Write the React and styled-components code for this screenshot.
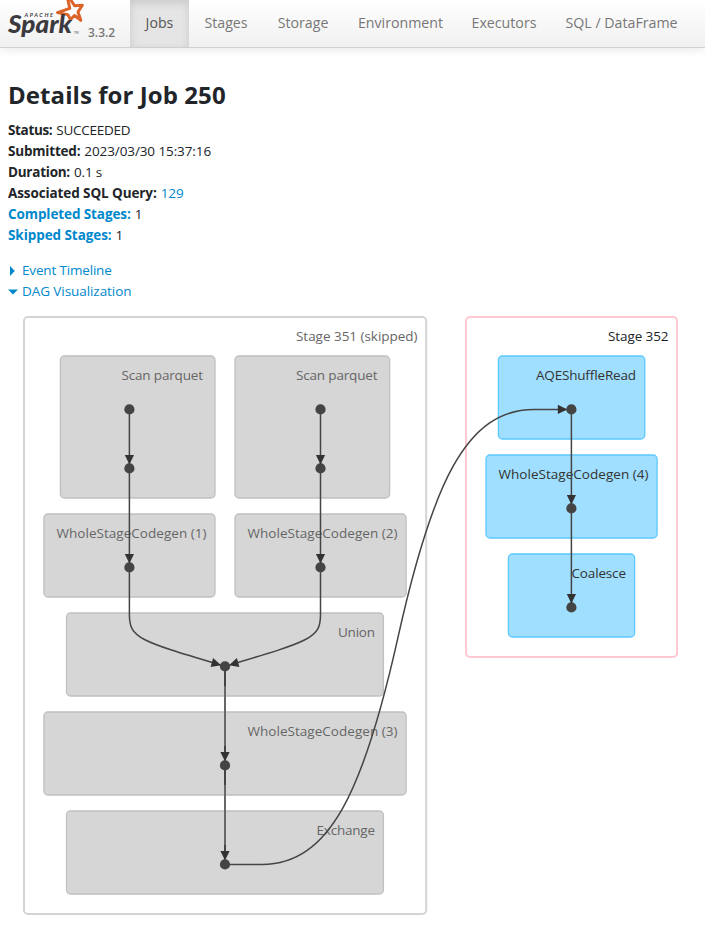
import React from "react";
import styled, { createGlobalStyle } from "styled-components";

const GlobalStyle = createGlobalStyle`
  * { box-sizing: border-box; }
  body {
    margin: 0;
    background: #fff;
    color: #212529;
    font: 13.5px/21px "Open Sans", "Noto Sans", sans-serif;
    overflow: hidden;
  }
`;

const Navbar = styled.nav`
  display: flex;
  height: 48px;
  border-bottom: 1px solid #d0d0d0;
  background: linear-gradient(#fff, #f0f0f0);
  box-shadow: 0 1px 10px rgba(0, 0, 0, 0.1);
`;

const Brand = styled.a`
  display: flex;
  width: 130px;
  flex: none;
`;

const Logo = styled.svg`
  width: 88px;
  height: 44px;
  flex: none;
`;

const Version = styled.span`
  padding-top: 22px;
  font-size: 12px;
  line-height: 21px;
  font-weight: 600;
  color: #777;
  letter-spacing: 0;
`;

const NavItem = styled.a`
  width: ${(p) => p.$width}px;
  flex: none;
  height: 47px;
  padding-top: 12px;
  text-align: center;
  font-size: 14.2px;
  line-height: 21px;
  white-space: nowrap;
  letter-spacing: ${(p) => p.$spacing || 0}px;
  color: ${(p) => (p.$active ? "#555" : "#777")};
  background: ${(p) => (p.$active ? "#e5e5e5" : "transparent")};
  box-shadow: ${(p) => (p.$active ? "inset 0 3px 8px rgba(0, 0, 0, 0.125)" : "none")};
`;

const Details = styled.main`
  padding: 32px 8px 0;
`;

const Title = styled.h3`
  margin: 0 0 10px;
  font-size: 24px;
  line-height: 30px;
  font-weight: 700;
  letter-spacing: 0.07px;
  white-space: nowrap;
`;

const Summary = styled.ul`
  list-style: none;
  margin: 0 0 14px;
  padding: 0;
`;

const Row = styled.li`
  height: 21px;
  white-space: nowrap;
`;

const Label = styled.strong`
  font-weight: 700;
  letter-spacing: ${(p) => p.$spacing}px;
  color: ${(p) => (p.$link ? "#0088cc" : "inherit")};
  margin-right: 4px;
`;

const Value = styled.span`
  letter-spacing: ${(p) => p.$spacing || 0}px;
  color: ${(p) => (p.$link ? "#0088cc" : "inherit")};
`;

const Toggle = styled.a`
  display: flex;
  align-items: center;
  height: 21px;
  color: #0088cc;
  letter-spacing: ${(p) => p.$spacing}px;
`;

const Caret = styled.svg`
  width: 14px;
  height: 12px;
`;

const Graph = styled.svg`
  display: block;
  width: 705px;
  height: 641px;
  text {
    font: 13.5px "Open Sans", "Noto Sans", sans-serif;
  }
`;

const palettes = {
  skipped: { fill: "#d6d6d6", stroke: "#c0c0c0", text: "#666", width: 1.3 },
  active: { fill: "#a0dfff", stroke: "#5cc9ff", text: "#333", width: 1.3 },
  skippedStage: { fill: "#fff", stroke: "#d4d4d4", text: "#666", width: 2 },
  stage: { fill: "#fff", stroke: "#ffc8d2", text: "#212529", width: 2 },
};

const clusters = [
  ["Stage 351 (skipped)", 24, 317, 426.2, 914, 296, 417.5, "skippedStage"],
  ["Scan parquet", 60.4, 356, 215, 498, 121.5, 203, "skipped"],
  ["Scan parquet", 235, 356, 389.6, 498, 296, 377.5, "skipped"],
  ["WholeStageCodegen (1)", 43.9, 514, 215, 597, 56.5, 206.5, "skipped"],
  ["WholeStageCodegen (2)", 235, 514, 406.1, 597, 247.5, 397.5, "skipped"],
  ["Union", 66.5, 613, 383.4, 696, 338, 375, "skipped"],
  ["WholeStageCodegen (3)", 43.9, 712, 406.1, 795, 247.5, 397.5, "skipped"],
  ["Exchange", 66.5, 811, 383.4, 894, 316.5, 375, "skipped"],
  ["Stage 352", 466, 317, 677.1, 657, 608, 668.5, "stage"],
  ["AQEShuffleRead", 498.4, 356, 644.8, 439, 536, 636, "active"],
  ["WholeStageCodegen (4)", 486, 455, 657.1, 538, 498.5, 648.5, "active"],
  ["Coalesce", 508.4, 554, 634.6, 637, 571.5, 626, "active"],
];

const nodes = [
  [129.4, 409.4], [129.4, 468.4], [129.4, 567.4],
  [320.5, 409.4], [320.5, 468.4], [320.5, 567.4],
  [225, 666.4], [225, 765.4], [225, 864.4],
  [571.4, 409.4], [571.4, 508.4], [571.4, 607.4],
];

const edges = [
  "M129.4 414V464", "M129.4 473V563",
  "M320.5 414V464", "M320.5 473V563",
  "M129.4 572V615C129.4 638 140 641 220.5 665",
  "M320.5 572V615C320.5 638 310 641 229.5 665",
  "M571.4 414V504", "M571.4 513V603",
  "M230 864.4H262C330 864.4 364 790 398.1 636.9C432.2 483.8 466.2 409.4 534 409.4H566.5",
];

const arrows = [
  [129.4, 464, 90], [129.4, 563, 90],
  [320.5, 464, 90], [320.5, 563, 90],
  [220.5, 665, 16], [229.5, 665, 164],
  [225, 761, 90], [225, 860, 90],
  [571.4, 504, 90], [571.4, 603, 90], [566.8, 409.4, 0],
];

function SparkLogo() {
  return (
    <Logo viewBox="0 0 88 44">
      <path
        d="M68 0.5L69.8 8.3L57.5 12.6L67.8 14.6L70.5 19.5L74.5 15.5L80.8 20.3L78 12L82.3 5.2L74.6 5.8L69.5 -2Z"
        fill="#fff" stroke="#dc6428" strokeWidth="3" strokeLinejoin="round"
      />
      <text x="24.5" y="17" textLength="28.5" fontFamily="Lato" fontWeight="700" fontStyle="italic" fontSize="5.6" fill="#3c3a3e">APACHE</text>
      <text x="8" y="33" textLength="64" lengthAdjust="spacingAndGlyphs" fontFamily="Lato" fontWeight="900" fontStyle="italic" fontSize="24.5" fill="#3c3a3e">Spark</text>
      <text x="74" y="34" fontFamily="Lato" fontSize="3" fill="#3c3a3e">TM</text>
    </Logo>
  );
}

function Dag() {
  return (
    <Graph viewBox="0 302 705 641">
      {clusters.map(([name, x, y, right, bottom, start, end, kind]) => (
        <g key={name + x}>
          <rect x={x} y={y} width={right - x} height={bottom - y} rx="4" fill={palettes[kind].fill} stroke={palettes[kind].stroke} strokeWidth={palettes[kind].width} />
          <text x={start} y={y + 24} textLength={end - start} fill={palettes[kind].text}>{name}</text>
        </g>
      ))}
      {nodes.map(([x, y]) => <circle key={`${x}-${y}`} cx={x} cy={y} r="5.1" fill="#444" />)}
      {edges.map((d) => <path key={d} d={d} fill="none" stroke="#444" strokeWidth="1.5" />)}
      <path d="M225 671V761M225 770V860" stroke="#686868" strokeWidth="2" />
      <path d="M225 671V686M225 746V755M225 770V785M225 845V854" stroke="#444" strokeWidth="2" />
      {arrows.map(([x, y, angle]) => (
        <path key={`${x}-${y}`} d="M-9 -4.6L0.5 0L-9 4.6Z" transform={`translate(${x} ${y}) rotate(${angle})`} fill="#333" />
      ))}
    </Graph>
  );
}

export default function App() {
  return (
    <>
      <GlobalStyle />
      <Navbar>
        <Brand><SparkLogo /><Version>3.3.2</Version></Brand>
        <NavItem $width={59} $active>Jobs</NavItem>
        <NavItem $width={74}>Stages</NavItem>
        <NavItem $width={80}>Storage</NavItem>
        <NavItem $width={115}>Environment</NavItem>
        <NavItem $width={92}>Executors</NavItem>
        <NavItem $width={143}>SQL / DataFrame</NavItem>
      </Navbar>
      <Details>
        <Title>Details for Job 250</Title>
        <Summary>
          <Row><Label $spacing={-0.35}>Status:</Label><Value $spacing={-0.25}>SUCCEEDED</Value></Row>
          <Row><Label $spacing={-0.2}>Submitted:</Label><Value $spacing={-0.1}>2023/03/30 15:37:16</Value></Row>
          <Row><Label $spacing={-0.25}>Duration:</Label><Value $spacing={-0.15}>0.1 s</Value></Row>
          <Row><Label $spacing={-0.1}>Associated SQL Query:</Label><Value $link $spacing={-0.1}>129</Value></Row>
          <Row><Label $link $spacing={-0.1}>Completed Stages:</Label><Value>1</Value></Row>
          <Row><Label $link $spacing={-0.07}>Skipped Stages:</Label><Value>1</Value></Row>
        </Summary>
        <Toggle $spacing={-0.17}><Caret viewBox="0 0 14 12"><path d="M2 1V11L6.8 6Z" fill="#08c" /></Caret>Event Timeline</Toggle>
        <Toggle $spacing={-0.07}><Caret viewBox="0 0 14 12"><path d="M0 3.5H10L5 8.5Z" fill="#08c" /></Caret>DAG Visualization</Toggle>
      </Details>
      <Dag />
    </>
  );
}
